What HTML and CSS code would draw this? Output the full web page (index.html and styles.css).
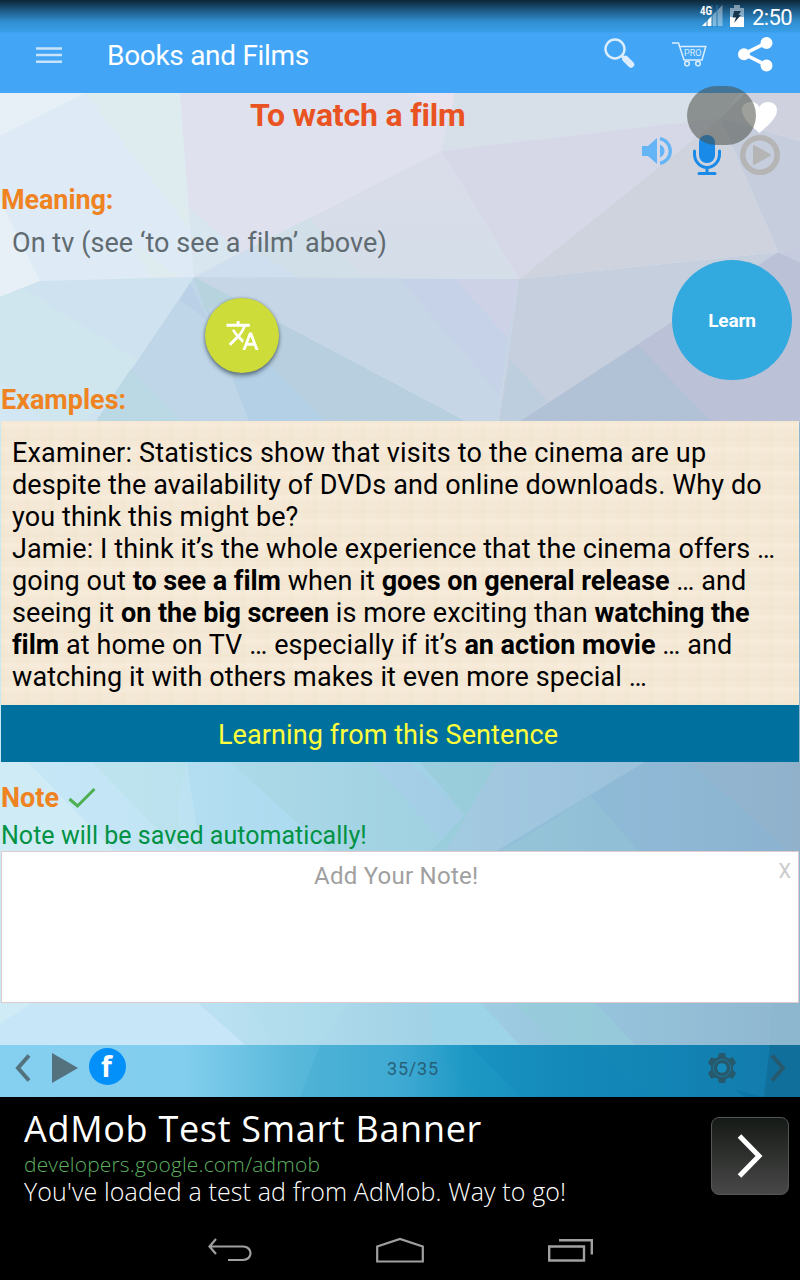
FILE: index.html
```html
<!DOCTYPE html>
<html lang="en">
<head>
<meta charset="utf-8">
<title>Books and Films</title>
<link rel="stylesheet" href="styles.css">
</head>
<body>
<div class="screen">
  <header class="top">
    <div class="status">
      <svg class="signal" width="23" height="22" viewBox="0 0 23 22"><path d="M22.500 0V21H2Z" fill="#fff" opacity=".38"/><path d="M12 11V21H2Z" fill="#fff"/><path d="M12 0V22M17 0V22M7 0V22" stroke="#2778ac" stroke-width="1"/><text x="0" y="10" class="fourg" textLength="12" lengthAdjust="spacingAndGlyphs">4G</text></svg>
      <svg class="battery" width="14" height="22" viewBox="0 0 14 22"><path d="M4 0h6v3h4v19H0V3h4Z" fill="#fff" opacity=".45"/><path d="M0 12H14V22H0Z" fill="#fff"/><path d="M4 6H11L8.6 10H11L4 18L6 12.5H2.6Z" fill="#18364b"/></svg>
      <span class="time">2:50</span>
    </div>
    <div class="appbar">
      <svg class="menu" width="26" height="17" viewBox="0 0 26 17"><path d="M0 1.500H26M0 8H26M0 14.700H26" stroke="#c8e3fa" stroke-width="2.400"/></svg>
      <h1>Books and Films</h1>
      <svg class="search" width="31" height="31" viewBox="0 0 31 31"><circle cx="11" cy="11" r="9.500" fill="none" stroke="#dceefe" stroke-width="2.400"/><path d="M18 18L20 20" stroke="#dceefe" stroke-width="3"/><path d="M21.500 21L27 26.500" stroke="#dceefe" stroke-width="6.500" stroke-linecap="round"/></svg>
      <svg class="cart" width="35" height="25" viewBox="0 0 35 25"><path d="M0 1H6.500L12 18H30L33.800 4.500H8.500" fill="none" stroke="#dceefe" stroke-width="1.500"/><circle cx="15" cy="21.600" r="2.300" fill="none" stroke="#dceefe" stroke-width="1.500"/><circle cx="26" cy="21.600" r="2.300" fill="none" stroke="#dceefe" stroke-width="1.500"/><text x="12" y="14.400" class="pro" textLength="17.500" lengthAdjust="spacingAndGlyphs">PRO</text></svg>
      <svg class="share" width="35" height="35" viewBox="0 0 35 35"><path d="M28 6L6 17L28 28" fill="none" stroke="#fff" stroke-width="3.600"/><circle cx="28.500" cy="6" r="6" fill="#fff"/><circle cx="6" cy="17.300" r="6" fill="#fff"/><circle cx="28.500" cy="28.500" r="6" fill="#fff"/></svg>
    </div>
  </header>

  <main class="content">
    <svg class="backdrop" width="800" height="952" viewBox="0 93 800 952">
      <defs>
        <linearGradient id="lower" x1="0" y1="0" x2="1" y2="0"><stop offset="0" stop-color="#c9e8f6"/><stop offset=".25" stop-color="#bce2f2"/><stop offset=".5" stop-color="#a4d4e7"/><stop offset=".75" stop-color="#96c4dc"/><stop offset="1" stop-color="#8fb6cf"/></linearGradient>
        <linearGradient id="mist" x1="0" y1="0" x2="0" y2="1"><stop offset="0" stop-color="#dadcea"/><stop offset="1" stop-color="#d4dee8"/></linearGradient>
      </defs>
      <rect y="93" width="800" height="330" fill="#deeaf6"/>
      <path d="M0 93H85L0 136ZM0 200L40 281L0 297Z" fill="#e8f0f7"/>
      <path d="M85 93H180L190 230Z" fill="#deebef"/><path d="M130 240L180 278H150Z" fill="#deebef"/>
      <path d="M180 93H454L441 151L194 277Z" fill="#dfe2ee"/>
      <path d="M190 208L240 252L194 277Z" fill="#d8e6ef"/>
      <path d="M454 93H740L720 118L441 151Z" fill="#d7dfe8"/>
      <path d="M412 93H454L451 120Z" fill="#e7e3ee"/>
      <path d="M441 151L720 118L519 279Z" fill="#d6d8e7"/>
      <path d="M441 151L519 279L194 277Z" fill="url(#mist)"/>
      <path d="M194 277L250 248L300 278Z" fill="#cfdfef"/><path d="M250 248L310 218L362 278H300Z" fill="#d0dfe8"/>
      <path d="M720 118L778 252L519 279Z" fill="#cfd3de"/>
      <path d="M720 118L745 93H800V141Z" fill="#cfd2de"/>
      <path d="M720 118L800 141V250L778 252Z" fill="#c6cede"/>
      <path d="M778 252L800 249V262Z" fill="#c6cbe0"/>
      <path d="M0 297L40 281L194 277L95 423H0Z" fill="#cfe2f0"/>
      <path d="M0 297L22 288L138 360L110 400L80 423H45L0 380Z" fill="#cfe7ee" opacity=".75"/>
      <path d="M0 380L45 423H0Z" fill="#d3e6f4"/>
      <path d="M194 277L95 423H260Z" fill="#bed6e7"/>
      <path d="M130 370L185 423H95Z" fill="#bbd9e4"/>
      <path d="M194 277L470 423H250Z" fill="#b7cfde"/>
      <path d="M194 277L280 322L240 380Z" fill="#bed5e5"/>
      <path d="M194 277L235 298L205 310Z" fill="#b6d3de"/><path d="M190 283L208 320L180 300Z" fill="#bad0e7"/>
      <path d="M233 380L270 365L327 423H250Z" fill="#b3d0e7"/>
      <path d="M194 277L519 279L498 423H470Z" fill="#c6d6e6"/>
      <path d="M400 279H455L508 338L500 395Z" fill="#c6d2e7"/><path d="M455 279H519L508 338Z" fill="#ced2e7"/>
      <path d="M519 279L778 252L517 423H498Z" fill="#c6cfde"/>
      <path d="M510 360L548 401L517 423H499Z" fill="#bdcede"/>
      <path d="M778 252L800 262V423H517Z" fill="#bbc1d6"/>
      <path d="M638 345L712 423H517Z" fill="#b2c2d6"/>
      <rect y="423" width="800" height="622" fill="url(#lower)"/>
      <g opacity=".45">
        <path d="M28 762H92L180 852H115Z" fill="#c6e7f8"/><path d="M92 762H187L178 800L180 852Z" fill="#b8e2e8"/>
        <path d="M187 762H230L330 852H200Z" fill="#a9daf2"/><path d="M230 762H370L475 852H330Z" fill="#a0d2df"/>
        <path d="M370 762H410L465 812L447 845Z" fill="#a6cbe8"/><path d="M420 762H497L446 852H430L465 815Z" fill="#92cbd2"/>
        <path d="M497 762H645L495 852H445Z" fill="#a6c4dd"/><path d="M645 762H690L790 852H495Z" fill="#88b0d2"/>
        <path d="M548 823L590 796L640 852H500Z" fill="#91c5cf" opacity=".6"/><path d="M690 762H800V852H790Z" fill="#94adc8"/>
      </g>
      <path d="M0 762H28L115 852H0ZM0 1003H32L0 1024Z" fill="#cfebf5"/>
      <path d="M32 1003H198L245 1045H0V1024Z" fill="#c7e7f8"/>
      <path d="M335 1003H348L323 1040L310 1045H280L245 1003Z" fill="#afdeec" opacity=".5"/>
      <path d="M430 1003H480L520 1045H432Z" fill="#9ed4e8"/><path d="M515 1003H595L635 1045H555Z" fill="#96ccd9" opacity=".8"/><path d="M772 1003H800V1045H770Z" fill="#8db7cf"/>
    </svg>

    <div class="title-row">
      <h2><span class="title-text">To watch a film</span></h2>
      <svg class="heart" width="35" height="31" viewBox="0 0 35 31"><path d="M17.500 31C11 25 0 17 0 8C0 3 4 0 9 0C13 0 16 2 17.500 5C19 2 22 0 26 0C31 0 35 3 35 8C35 17 24 25 17.500 31Z" fill="#fff"/></svg>
    </div>
    <div class="audio-row">
      <svg class="speaker" width="30" height="28" viewBox="0 0 30 28"><path d="M0 9H6L15 1V27L6 19H0ZM18 7.500C24 10 24 18 18 20.500Z" fill="#64b5f6"/><path d="M18 1.700A12.500 12.500 0 0 1 18 26.300" fill="none" stroke="#64b5f6" stroke-width="3.400"/></svg>
      <svg class="mic" width="28" height="40" viewBox="0 0 28 40"><rect x="6" width="16" height="28" rx="7.500" fill="#198ae8"/><path d="M1.500 16V19A12.500 13.500 0 0 0 26.500 19V16M14 33V38M6 38.500H22" fill="none" stroke="#198ae8" stroke-width="3" stroke-linecap="round"/></svg>
      <svg class="play" width="40" height="40" viewBox="0 0 40 40"><circle cx="20" cy="20" r="17.200" fill="none" stroke="#b5b5b5" stroke-width="5.600"/><path d="M14 11L30 20L14 29Z" fill="#b5b5b5" stroke="#b5b5b5" stroke-width="2" stroke-linejoin="round"/></svg>
    </div>
    <div class="touch"></div>

    <h3 class="label meaning-label"><span>Meaning:</span></h3>
    <p class="meaning"><span>On tv (see ‘to see a film’ above)</span></p>
    <div class="actions">
      <button class="translate"><svg width="35" height="35" viewBox="0 0 24 24"><path fill="#fff" d="M12.870 15.070l-2.540-2.510.03-.03c1.740-1.940 2.980-4.170 3.710-6.530H17V4h-7V2H8v2H1v1.990h11.170C11.500 7.920 10.440 9.750 9 11.350 8.070 10.320 7.300 9.190 6.690 8h-2c.73 1.630 1.730 3.170 2.980 4.560l-5.090 5.020L4 19l5-5 3.110 3.110.76-2.040zM18.500 10h-2L12 22h2l1.120-3h4.750L21 22h2l-4.500-12zm-2.620 7l1.620-4.330L19.120 17h-3.240z"/></svg></button>
      <button class="learn">Learn</button>
    </div>
    <h3 class="label examples-label"><span>Examples:</span></h3>
    <div class="examples">
      <div class="line l1"><span>Examiner: Statistics show that visits to the cinema are up</span></div>
      <div class="line l2"><span>despite the availability of DVDs and online downloads. Why do</span></div>
      <div class="line l3"><span>you think this might be?</span></div>
      <div class="line l4"><span>Jamie: I think it’s the whole experience that the cinema offers …</span></div>
      <div class="line l5"><span>going out <b>to see a film</b> when it <b>goes on general release</b> … and</span></div>
      <div class="line l6"><span>seeing it <b>on the big screen</b> is more exciting than <b>watching the</b></span></div>
      <div class="line l7"><span><b>film</b> at home on TV … especially if it’s <b>an action movie</b> … and</span></div>
      <div class="line l8"><span>watching it with others makes it even more special …</span></div>
    </div>
    <button class="sentence"><span>Learning from this Sentence</span></button>
    <div class="note-head">
      <h3 class="label"><span>Note</span></h3>
      <svg width="28" height="22" viewBox="0 0 28 22"><path d="M1.500 12L9.500 19L26.500 2" fill="none" stroke="#4caf50" stroke-width="3"/></svg>
    </div>
    <p class="saved"><span>Note will be saved automatically!</span></p>
    <div class="note"><span class="placeholder">Add Your Note!</span><span class="clear">X</span></div>
  </main>

  <nav class="pager">
    <svg class="facets" width="800" height="52" viewBox="0 0 800 52"><path d="M320 0H430L475 52H300Z" fill="#329fc6" opacity=".2"/><path d="M470 0H590L650 52H520Z" fill="#0d83b7" opacity=".2"/><path d="M770 0H800V52H764Z" fill="#116f9b"/><path d="M735 45L764 52H745Z" fill="#0c75aa"/></svg>
    <svg class="prev" width="16" height="28" viewBox="0 0 16 28"><path d="M14 1.500L3 14L14 26.500" fill="none" stroke="#53727e" stroke-width="4"/></svg>
    <svg class="next-play" width="26" height="30" viewBox="0 0 26 30"><path d="M0 0L26 15L0 30Z" fill="#53727e"/></svg>
    <span class="facebook">f</span>
    <span class="count">35/35</span>
    <svg class="gear" width="28" height="30" viewBox="0 0 28 30"><path d="M11 0H17L18 4L21 5.500L25 4.200L28 10L25 13V17L28 20L25 25.800L21 24.500L18 26L17 30H11L10 26L7 24.500L3 25.800L0 20L3 17V13L0 10L3 4.200L7 5.500L10 4Z" fill="#27596d"/><circle cx="14" cy="15" r="8.600" fill="none" stroke="#1b7da5" stroke-width=".8"/><circle cx="14" cy="15" r="4.800" fill="#168abb"/></svg>
    <svg class="next" width="16" height="28" viewBox="0 0 16 28"><path d="M2 1.500L13 14L2 26.500" fill="none" stroke="#27596d" stroke-width="4"/></svg>
  </nav>

  <section class="ad">
    <div class="ad-copy">
      <div class="ad-title"><span>AdMob Test Smart Banner</span></div>
      <div class="ad-url"><span>developers.google.com/admob</span></div>
      <div class="ad-text"><span>You've loaded a test ad from AdMob. Way to go!</span></div>
    </div>
    <div class="ad-go"><svg width="26" height="44" viewBox="0 0 26 44"><path d="M2.500 2L22 22L2.500 42" fill="none" stroke="#fff" stroke-width="5"/></svg></div>
  </section>
  <nav class="system">
    <svg width="44" height="24" viewBox="0 0 44 24"><path d="M8 1L1.500 8.500L8 16M2 8.500H35C45 8.500 45 22 35 22H20" fill="none" stroke="#a0a0a0" stroke-width="2.200"/></svg>
    <svg width="48" height="26" viewBox="0 0 48 26"><path d="M1.200 9.500L24 2L46.800 9.500V24.500H1.200Z" fill="none" stroke="#a0a0a0" stroke-width="2.200"/></svg>
    <svg width="46" height="24" viewBox="0 0 46 24"><path d="M1.200 8.500H36V22.500H1.200ZM11 2.200H43.800V16.500" fill="none" stroke="#a0a0a0" stroke-width="2.400"/></svg>
  </nav>
</div>
</body>
</html>
```
FILE: styles.css
```css
* { box-sizing: border-box; }
body { margin: 0; font-family: Roboto, sans-serif; background: #000; }
h1, h2, h3, p { margin: 0; }
button { border: 0; padding: 0; font-family: inherit; }
svg { display: block; flex: none; }
.screen { width: 800px; height: 1280px; overflow: hidden; display: flex; flex-direction: column; white-space: nowrap; }

.top { height: 93px; background: linear-gradient(#0d2638 0, #123954 4px, #1f5d8a 11px, #308fd0 22px, #399fe9 32px, #42a5f5 33px); }
.status { height: 34px; display: flex; justify-content: flex-end; align-items: center; padding-right: 8px; color: #fff; }
.signal { margin: -3px 7px 0 0; overflow: visible; }
.fourg { font: bold 12px Roboto, sans-serif; fill: #fff; }
.battery { margin: -3px 8px 0 0; }
.time { font-size: 22px; line-height: 34px; padding-top: 2px; letter-spacing: -.6px; }
.appbar { height: 43px; display: flex; align-items: center; padding-left: 36px; padding-right: 26px; }
h1 { color: #fff; font-size: 28px; font-weight: 400; letter-spacing: -.3px; width: 500px; margin-left: 45px; }
.cart { margin-left: 37px; margin-top: -2px; }
.share { margin-left: 31px; margin-top: -3px; }
.search { margin-top: -4px; margin-left: -3px; }
.pro { font: 400 9.5px Roboto, sans-serif; fill: #dceefe; }

.content { position: relative; height: 952px; isolation: isolate; flex: none; }
.backdrop { position: absolute; inset: 0; z-index: -1; }
.title-row { height: 38px; display: flex; align-items: center; padding-left: 250px; }
h2 { color: #e95322; font-size: 32px; line-height: 44px; font-weight: 700; letter-spacing: -.18px; width: 492px; padding-top: 6px; }
.heart { margin-top: 10px; }
.audio-row { height: 49px; display: flex; align-items: flex-start; padding: 4px 0 0 642px; }
.speaker { margin: 2px 21px 0 0; }
.mic { margin-right: 19px; }
.touch { position: absolute; left: 687px; top: -7px; width: 69px; height: 59px; border-radius: 30px; background: rgba(72, 76, 66, .53); }
.label { color: #ef8322; font-size: 27px; font-weight: 700; letter-spacing: 0; line-height: 41px; padding-left: 1px; }
.meaning-label { height: 41px; letter-spacing: -.1px; }
.meaning { height: 39px; line-height: 44px; font-size: 27px; letter-spacing: .06px; color: #606b71; padding-left: 12px; }
.actions { height: 120px; display: flex; align-items: center; justify-content: space-between; padding: 0 8px 0 205px; }
.translate { width: 74px; height: 75px; border-radius: 50%; background: #cddc39; display: grid; place-items: center; box-shadow: 0 3px 4px rgba(35, 52, 70, .55), 0 0 3px rgba(60, 70, 80, .4); margin-top: 30px; }
.learn { width: 120px; height: 120px; border-radius: 50%; background: #32a9df; color: #fff; font-size: 19px; font-weight: 700; letter-spacing: -.15px; }
.examples-label { height: 41px; }
.examples { margin: 0 1px; height: 284px; padding: 16px 0 0 11px; color: #000; font-size: 27px; background-color: #f4e8d6; background-image: repeating-linear-gradient(90deg, rgba(235, 225, 183, .14) 0 3px, transparent 5px 15px, rgba(255, 224, 205, .2) 17px 20px, transparent 22px 24px), repeating-linear-gradient(0deg, rgba(225, 223, 180, .14) 0 2px, transparent 4px 12px, rgba(255, 244, 230, .3) 14px 17px, transparent 19px 24px); }
.line { height: 32px; line-height: 32px; letter-spacing: .1px; }
.l1 { letter-spacing: .175px; }
.l2 { letter-spacing: .12px; }
.line b { font-weight: 700; letter-spacing: -.06px; }
.sentence { display: block; width: 798px; margin: 0 1px; height: 57px; padding: 2px 24px 0 0; background: #00719f; color: #ffff3b; font-size: 27px; letter-spacing: .09px; }
.note-head { height: 57px; padding-top: 15px; display: flex; align-items: center; gap: 9px; }
.saved { height: 32px; line-height: 33px; padding-left: 1px; font-size: 25px; letter-spacing: .03px; color: #009244; }
.note { height: 152px; margin: 0 1px; background: #fff; border: 1px solid #dfcbcb; display: flex; padding-left: 312px; color: #a0a0a0; }
.placeholder { font-size: 24px; line-height: 48px; letter-spacing: .25px; }
.clear { margin-left: auto; padding-right: 7px; font-size: 20px; line-height: 38px; color: #cbcbcb; }

.pager { position: relative; isolation: isolate; height: 52px; flex: none; display: flex; align-items: center; background: linear-gradient(90deg, #85cff0 0, #82ceee 23%, #58b8da 37%, #42add7 50%, #1d98c5 58%, #148bb9 72%, #1283b4 85%, #1279aa 100%); padding: 0 15px 6px; }
.facets { position: absolute; inset: 0; z-index: -1; }
.next-play { margin-left: 21px; }
.facebook { width: 37px; height: 37px; border-radius: 50%; background: #0390f8; color: #fff; font: bold 28px/37px "Open Sans", sans-serif; text-align: center; margin-left: 11px; margin-top: -4px; padding-right: 2px; }
.count { font-size: 18px; color: #286078; letter-spacing: .8px; margin-left: 261px; }
.gear { margin-left: auto; }
.next { margin-left: 34px; margin-right: -1px; }

.ad { height: 123px; flex: none; background: #000; color: #fff; font-family: "Open Sans", sans-serif; display: flex; justify-content: space-between; padding: 10px 11px 0 24px; }
.ad-title { font-size: 36px; line-height: 44px; letter-spacing: .7px; }
.ad-url { font-size: 21px; line-height: 27px; letter-spacing: .15px; color: #5daf60; font-weight: 300; }
.ad-text { font-size: 25px; line-height: 27px; letter-spacing: .13px; font-weight: 300; }
.ad-go { width: 78px; height: 78px; margin-top: 10px; border: 1px solid #555; border-radius: 8px; background: linear-gradient(#161a16, #484848); display: grid; place-items: center; }
.system { height: 60px; display: flex; align-items: center; gap: 124px; padding-left: 208px; }
```
